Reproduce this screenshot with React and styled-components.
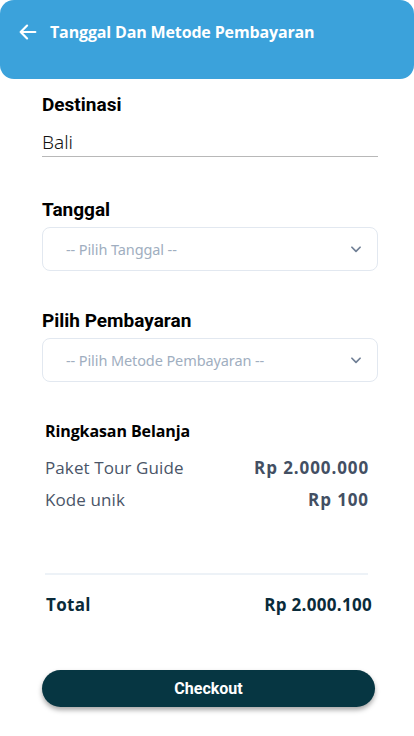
import React from "react";
import styled, { createGlobalStyle } from "styled-components";

const Global = createGlobalStyle`
  html, body { margin: 0; padding: 0; background: #fff; }
  body { font-family: "Noto Sans", sans-serif; }
  * { box-sizing: border-box; }
`;

const Page = styled.div`
  width: 414px;
  min-height: 736px;
  background: #fff;
  display: flex;
  flex-direction: column;
`;

const Header = styled.header`
  height: 79px;
  background: #3ba2db;
  border-radius: 14px;
  display: flex;
  align-items: flex-start;
  padding: 21px 0 0 16px;
  gap: 10px;
`;

const BackButton = styled.button`
  border: 0;
  background: none;
  padding: 0;
  width: 24px;
  height: 22px;
  display: flex;
  align-items: center;
  justify-content: center;
  color: #fff;
`;

const Title = styled.h1`
  margin: 0;
  font-family: "Open Sans", sans-serif;
  font-weight: 700;
  font-size: 16px;
  line-height: 22px;
  color: #fff;
  letter-spacing: -0.15px;
`;

const Content = styled.main`
  padding: 0 36px 0 42px;
  display: flex;
  flex-direction: column;
`;

const Label = styled.label`
  display: block;
  font-family: Roboto, sans-serif;
  font-weight: 700;
  font-size: 19px;
  line-height: 22px;
  color: #000;
  margin-top: ${(p) => p.$top}px;
`;

const TextValue = styled.div`
  margin-top: 14px;
  font-family: "Noto Sans", sans-serif;
  font-weight: 300;
  font-size: 19px;
  line-height: 24px;
  color: #111;
  padding-bottom: 2px;
  border-bottom: 1px solid #b8b8b8;
`;

const Select = styled.div`
  margin-top: 6px;
  height: 44px;
  border: 1px solid #e2e8f0;
  border-radius: 8px;
  display: flex;
  align-items: center;
  justify-content: space-between;
  padding: 0 14px 0 23px;
  font-family: "Noto Sans", sans-serif;
  font-size: 14.5px;
  letter-spacing: -0.1px;
  color: #a0aec0;
`;

const Summary = styled.section`
  padding: 0 46px 0 45px;
  display: flex;
  flex-direction: column;
  font-family: "Open Sans", sans-serif;
`;

const SummaryTitle = styled.h2`
  margin: 38px 0 0 0;
  font-weight: 700;
  font-size: 16px;
  line-height: 22px;
  color: #000;
  letter-spacing: -0.1px;
`;

const Row = styled.div`
  display: flex;
  justify-content: space-between;
  align-items: center;
  height: 32px;
  font-size: 17px;
  letter-spacing: 0.1px;
  color: #4a5568;
  margin-top: ${(p) => p.$top || 0}px;
`;

const Amount = styled.span`
  font-weight: 700;
  letter-spacing: 0.9px;
  color: #434f63;
  margin-right: -1px;
`;

const Divider = styled.hr`
  margin: 58px 0 0 0;
  border: 0;
  border-top: 2px solid #edf2f7;
`;

const TotalRow = styled.div`
  display: flex;
  justify-content: space-between;
  align-items: center;
  margin-top: 18px;
  margin-right: -4px;
  margin-left: 1px;
  font-weight: 700;
  font-size: 17px;
  letter-spacing: 0.3px;
  color: #0a2b3a;
`;

const Footer = styled.div`
  padding: 54px 39px 0 42px;
`;

const CheckoutButton = styled.button`
  width: 100%;
  height: 37px;
  border: 0;
  border-radius: 19px;
  background: #063642;
  color: #fff;
  font-family: Roboto, sans-serif;
  font-weight: 700;
  font-size: 16px;
  box-shadow: 0 3px 5px rgba(0, 0, 0, 0.35);
`;

const Chevron = () => (
  <svg width="14" height="14" viewBox="0 0 24 24" fill="none" stroke="#718096" strokeWidth="3" strokeLinecap="round" strokeLinejoin="round">
    <path d="M5 9l7 7 7-7" />
  </svg>
);

const ArrowLeft = () => (
  <svg width="22" height="22" viewBox="0 0 24 24" fill="none" stroke="#fff" strokeWidth="2.4" strokeLinecap="round" strokeLinejoin="round">
    <path d="M20 12H4M11 5l-7 7 7 7" />
  </svg>
);

export default function App() {
  return (
    <>
      <Global />
      <Page>
        <Header>
          <BackButton aria-label="Kembali">
            <ArrowLeft />
          </BackButton>
          <Title>Tanggal Dan Metode Pembayaran</Title>
        </Header>
        <Content>
          <Label $top={15}>Destinasi</Label>
          <TextValue>Bali</TextValue>
          <Label $top={42}>Tanggal</Label>
          <Select>
            <span>-- Pilih Tanggal --</span>
            <Chevron />
          </Select>
          <Label $top={39}>Pilih Pembayaran</Label>
          <Select>
            <span>-- Pilih Metode Pembayaran --</span>
            <Chevron />
          </Select>
        </Content>
        <Summary>
          <SummaryTitle>Ringkasan Belanja</SummaryTitle>
          <Row $top={9}>
            <span>Paket Tour Guide</span>
            <Amount>Rp 2.000.000</Amount>
          </Row>
          <Row>
            <span>Kode unik</span>
            <Amount>Rp 100</Amount>
          </Row>
          <Divider />
          <TotalRow>
            <span>Total</span>
            <span>Rp 2.000.100</span>
          </TotalRow>
        </Summary>
        <Footer>
          <CheckoutButton>Checkout</CheckoutButton>
        </Footer>
      </Page>
    </>
  );
}
